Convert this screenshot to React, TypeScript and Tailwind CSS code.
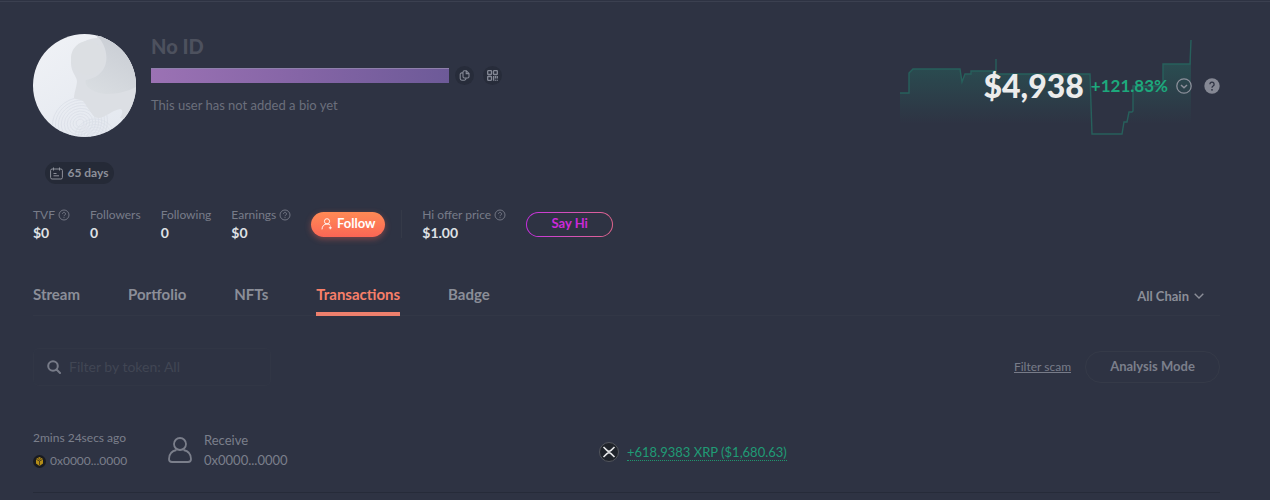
import clsx from 'clsx'

const TABS = ['Stream', 'Portfolio', 'NFTs', 'Transactions', 'Badge']

function HelpIcon() {
  return (
    <svg className="h-3 w-3 shrink-0" viewBox="0 0 12 12" fill="none" stroke="currentColor" aria-hidden="true">
      <circle cx="6" cy="6" r="5" strokeWidth="0.9" />
      <path d="M4.5 4.8a1.5 1.5 0 1 1 2.3 1.3c-.5.3-.8.5-.8 1.1" strokeWidth="0.9" />
      <circle cx="6" cy="8.7" r="0.35" strokeWidth="0.5" />
    </svg>
  )
}

function Avatar() {
  return (
    <svg className="h-[103px] w-[103px] shrink-0" viewBox="0 0 103 103" role="img" aria-label="Profile picture">
      <defs>
        <clipPath id="avatar-clip">
          <circle cx="51.5" cy="51.5" r="51.5" />
        </clipPath>
        <linearGradient id="avatar-bg" x1="0" y1="0" x2="0.6" y2="1">
          <stop offset="0" stopColor="#f0f2f6" />
          <stop offset="1" stopColor="#e5e9f0" />
        </linearGradient>
        <linearGradient id="avatar-hair" x1="0.1" y1="1" x2="0.6" y2="0">
          <stop offset="0" stopColor="#dadee2" />
          <stop offset="1" stopColor="#c9cdd4" />
        </linearGradient>
      </defs>
      <g clipPath="url(#avatar-clip)">
        <rect width="103" height="103" fill="url(#avatar-bg)" />
        <g fill="none" stroke="#d8dde6" strokeWidth="0.6">
          {[4, 7, 10, 13, 16, 19, 22, 25, 28].map((r) => (
            <ellipse key={r} cx="47" cy="89" rx={r} ry={r * 0.9} transform="rotate(-25 47 89)" />
          ))}
          {[5, 8, 11, 14, 17, 20].map((r) => (
            <path key={r} d={`M${62 - r} 103a${r} ${r * 0.9} 0 0 1 ${r * 2} 0`} />
          ))}
        </g>
        <path
          d="M64 4C49 5 38 15 38 29c0 9 5 12 6 18 0 5-3 12-3 17 2 2 6 1 9 3 3 3 4 7 7 10 3 4 4 7 9 7 7-1 12-7 21-9 3 0 3 4 0 9l18 3V0H64z"
          fill="#dcdfe4"
        />
        <path d="M64 2C73 10 76 25 71 34c-4 8-12 11-18 12-3 6 8 14 20 14 14 0 23-3 32-8V0z" fill="url(#avatar-hair)" />
        <circle cx="55" cy="24" r="17" fill="#dcdfe3" />
      </g>
    </svg>
  )
}

function BalanceChart() {
  const line =
    'M0 53H9V33L13 29H60L62 42L65 34H71V31H96V19V34H190L192 94H222L224 82H227L229 72H232L233 71V46H263V24H290L291 0'
  return (
    <svg className="absolute top-[6px] left-0 h-[96px] w-[292px]" viewBox="0 0 292 96" aria-hidden="true">
      <defs>
        <linearGradient id="chart-fill" gradientUnits="userSpaceOnUse" x1="0" y1="20" x2="0" y2="84">
          <stop offset="0" stopColor="#1f8f74" stopOpacity="0.3" />
          <stop offset="1" stopColor="#1f8f74" stopOpacity="0" />
        </linearGradient>
      </defs>
      <path d={`${line}V96H0Z`} fill="url(#chart-fill)" />
      <path d={line} fill="none" stroke="#27605c" strokeWidth="1.4" />
    </svg>
  )
}

function Stat({ label, value, help }: { label: string; value: string; help?: boolean }) {
  return (
    <div>
      <dt className="flex h-[18px] items-center gap-[3px] text-xs text-[#787c89]">
        {label}
        {help && <HelpIcon />}
      </dt>
      <dd className="text-sm/[18px] font-bold text-[#dfe1e5]">{value}</dd>
    </div>
  )
}

function ProfileHeader() {
  return (
    <header className="flex justify-between">
      <div className="flex gap-[15px]">
        <Avatar />
        <div>
          <h1 className="text-xl/6 font-black text-[#4d515e]">No ID</h1>
          <div className="mt-2 flex items-center gap-[6px]">
            <div className="h-[15px] w-[298px] border-t border-[#8f80ac] bg-linear-to-r from-[#9b72b4] via-[#8565a6] to-[#6d5a98]" />
            <button
              type="button"
              aria-label="Copy address"
              className="flex h-[19px] w-[19px] items-center justify-center rounded-full bg-[#272c3a] text-[#858996]"
            >
              <svg className="h-[11px] w-[11px]" viewBox="0 0 11 11" fill="none" stroke="currentColor" strokeWidth="1.1">
                <path d="M4 2.2A1.4 1.4 0 0 1 5.4.8H7.4L10 3.4V6.6A1.4 1.4 0 0 1 8.6 8H5.4A1.4 1.4 0 0 1 4 6.6ZM7.2 1V3.6H9.8M3.8 2.9H2.8A1.6 1.6 0 0 0 1.2 4.5V8.6A1.6 1.6 0 0 0 2.8 10.2H5.4A1.6 1.6 0 0 0 7 8.6V8.2" />
              </svg>
            </button>
            <button
              type="button"
              aria-label="Show QR code"
              className="ml-[3px] flex h-[19px] w-[19px] items-center justify-center rounded-full bg-[#272c3a] text-[#858996]"
            >
              <svg className="h-[11px] w-[11px]" viewBox="0 0 11 11" fill="none" stroke="currentColor" strokeWidth="1.3">
                <rect x="0.7" y="0.7" width="3.8" height="3.8" rx="0.5" />
                <rect x="6.5" y="0.7" width="3.8" height="3.8" rx="0.5" />
                <rect x="0.7" y="6.5" width="3.8" height="3.8" rx="0.5" />
                <path d="M6.6 6V10.8M8.5 6V8.5M10.3 6V8.5M8.5 9.7V10.8M10.3 9.7V10.8" />
              </svg>
            </button>
          </div>
          <p className="mt-3 text-[13px]/4 text-[#6b6f7c]">This user has not added a bio yet</p>
        </div>
      </div>

      <div className="relative h-[103px] w-[320px]">
        <BalanceChart />
        <div className="relative flex h-[103px] items-center justify-end">
          <span className="text-[32px]/10 font-black text-[#ececec]">$4,938</span>
          <span className="ml-[7px] text-[17px] font-bold text-[#1da87c]">+121.83%</span>
          <button type="button" aria-label="Show balance details" className="ml-2 text-[#8b8f9a]">
            <svg className="h-4 w-4" viewBox="0 0 16 16" fill="none" stroke="currentColor">
              <circle cx="8" cy="8" r="7.2" strokeWidth="1.3" />
              <path d="M5 7l3 2.8L11 7" strokeWidth="1.5" />
            </svg>
          </button>
          <button type="button" aria-label="Help" className="ml-3 text-[#858894]">
            <svg className="h-4 w-4" viewBox="0 0 16 16">
              <circle cx="8" cy="8" r="7.7" fill="currentColor" />
              <path d="M5.9 6.2a2.1 2.1 0 1 1 3.2 1.8c-.8.5-1.1.8-1.1 1.7" fill="none" stroke="#2e3343" strokeWidth="1.3" />
              <circle cx="8" cy="11.8" r="0.9" fill="#2e3343" />
            </svg>
          </button>
        </div>
      </div>
    </header>
  )
}

function ProfileStats() {
  return (
    <section className="mt-[22px] flex h-9 items-center">
      <dl className="flex gap-5">
        <Stat label="TVF" value="$0" help />
        <Stat label="Followers" value="0" />
        <Stat label="Following" value="0" />
        <Stat label="Earnings" value="$0" help />
      </dl>
      <button
        type="button"
        className="ml-5 flex h-[25px] w-[74px] items-center justify-center gap-1 rounded-full bg-linear-to-b from-[#ff8a55] to-[#fb6655] text-[13px] font-bold text-white shadow-[0_2px_6px_#fb665566]"
      >
        <svg className="h-3 w-3" viewBox="0 0 12 12" fill="none" stroke="currentColor" strokeWidth="0.9">
          <circle cx="6" cy="3.3" r="2.6" />
          <path d="M1 11.4c0-3.2 2-5.4 5-5.4 1.4 0 2.5.5 3.3 1.2M9.3 8.3v3M7.8 9.8h3" />
        </svg>
        Follow
      </button>
      <div className="mr-5 ml-4 h-7 w-px bg-[#353a48]" />
      <dl>
        <Stat label="Hi offer price" value="$1.00" help />
      </dl>
      <button
        type="button"
        className="ml-5 h-[25px] w-[87px] rounded-full bg-linear-to-r from-[#c72be0] to-[#e0648c] p-px text-[13px] font-bold text-[#cc2ad9]"
      >
        <span className="flex h-full items-center justify-center rounded-full bg-[#2e3343]">Say Hi</span>
      </button>
    </section>
  )
}

function TabBar() {
  return (
    <div className="mt-[42px] flex items-start justify-between border-b border-[#323746]">
      <nav className="-mb-px flex gap-12">
        {TABS.map((tab) => (
          <a
            key={tab}
            href={`#${tab.toLowerCase()}`}
            className={clsx(
              'h-8 border-b-4 text-[15px]/5 font-bold',
              tab === 'Transactions' ? 'border-[#ee806d] text-[#f77f69]' : 'border-transparent text-[#8b8e98]',
            )}
          >
            {tab}
          </a>
        ))}
      </nav>
      <div className="relative mr-4 flex items-center text-[#8b8e98]">
        <select
          aria-label="Chain"
          className="field-sizing-content h-6 appearance-none bg-transparent pr-[15px] text-[13px]/6 font-bold outline-none"
        >
          <option>All Chain</option>
        </select>
        <svg className="pointer-events-none absolute right-0 h-[10px] w-[10px]" viewBox="0 0 10 10" fill="none" stroke="currentColor" strokeWidth="1.4">
          <path d="M0.7 2.8L5 7L9.3 2.8" />
        </svg>
      </div>
    </div>
  )
}

function Filters() {
  return (
    <div className="mt-8 flex items-center justify-between">
      <label className="flex h-[38px] w-[238px] items-center gap-2 rounded-md border border-[#313645] pl-[13px]">
        <svg className="h-[14px] w-[14px] shrink-0 text-[#777b88]" viewBox="0 0 14 14" fill="none" stroke="currentColor" strokeWidth="2">
          <circle cx="6" cy="6" r="4.8" />
          <path d="M9.5 9.5L13 13" strokeLinecap="round" />
        </svg>
        <input
          type="text"
          aria-label="Filter by token"
          placeholder="Filter by token: All"
          className="h-6 w-full min-w-0 bg-transparent text-sm/6 outline-none placeholder:text-[#414654]"
        />
      </label>
      <div className="flex items-center gap-[14px]">
        <a href="#filter-scam" className="text-xs text-[#787c89] underline">
          Filter scam
        </a>
        <button
          type="button"
          className="h-8 w-[135px] rounded-full border border-[#353a48] text-[13px] font-bold text-[#7b7f8b]"
        >
          Analysis Mode
        </button>
      </div>
    </div>
  )
}

function TransactionTable() {
  return (
    <table className="mt-9 w-full table-fixed text-left text-[#7b7f8b]">
      <colgroup>
        <col className="w-[135px]" />
        <col className="w-[431px]" />
        <col />
      </colgroup>
      <tbody>
        <tr className="h-[70px] border-b border-[#262b39] align-top">
          <td className="pt-2 text-xs/4">
            <p>2mins 24secs ago</p>
            <p className="mt-[7px] flex items-center gap-1">
              <svg className="h-[13px] w-[13px]" viewBox="0 0 13 13" aria-hidden="true">
                <circle cx="6.5" cy="6.5" r="6.5" fill="#191b20" />
                <path d="M6.5 2L10 4V8.5L6.5 11L3 8.5V4Z" fill="#b48d18" />
                <path d="M3.2 4.3L6.5 6L9.8 4.3M6.5 6V10.5M5 3.5L6.5 4.3L8 3.5" stroke="#3b3117" strokeWidth="0.8" fill="none" />
              </svg>
              0x0000...0000
            </p>
          </td>
          <td className="pt-2">
            <div className="flex items-center gap-3">
              <svg className="h-[26px] w-6" viewBox="0 0 24 26" fill="none" stroke="currentColor" strokeWidth="1.8" aria-hidden="true">
                <circle cx="12" cy="7" r="6" />
                <path d="M8.5 13C4 14 1 17.5 1 22c0 2 1 3 3 3h16c2 0 3-1 3-3 0-4.5-3-8-7.5-9" />
              </svg>
              <div className="text-[13px]/5">
                <p>Receive</p>
                <p>0x0000...0000</p>
              </div>
            </div>
          </td>
          <td className="pt-5">
            <div className="flex items-center gap-2">
              <svg className="h-5 w-5" viewBox="0 0 20 20" fill="none" aria-hidden="true">
                <circle cx="10" cy="10" r="9.5" fill="#20242b" stroke="#53565d" />
                <path d="M4.5 5L8 8.3C9.2 9.4 10.8 9.4 12 8.3L15.5 5M4.5 15L8 11.7C9.2 10.6 10.8 10.6 12 11.7L15.5 15" stroke="#e6e7e8" strokeWidth="1.6" />
              </svg>
              <a href="#xrp" className="border-b border-dotted border-[#20966f] text-[13px]/4 text-[#209b75]">
                +618.9383 XRP ($1,680.63)
              </a>
            </div>
          </td>
        </tr>
      </tbody>
    </table>
  )
}

export default function App() {
  return (
    <div className="min-h-screen bg-[#2e3343] pt-px font-[Lato,sans-serif]">
      <main className="border-t border-[#3b4050] pt-8 pr-[50px] pl-[33px]">
        <ProfileHeader />
        <div className="mt-[25px] ml-3 flex h-[22px] w-[69px] items-center justify-center gap-1 rounded-full bg-[#252a37] text-xs font-bold text-[#8d909a]">
          <svg className="h-[13px] w-[13px]" viewBox="0 0 13 13" fill="none" stroke="currentColor" aria-hidden="true">
            <rect x="0.6" y="2" width="11.8" height="10" rx="1.5" />
            <path d="M3.5 0.5V3.5M9.5 0.5V3.5M3.5 6.5H6.5M3.5 8.8H9" />
          </svg>
          65 days
        </div>
        <ProfileStats />
        <TabBar />
        <Filters />
        <TransactionTable />
      </main>
    </div>
  )
}
